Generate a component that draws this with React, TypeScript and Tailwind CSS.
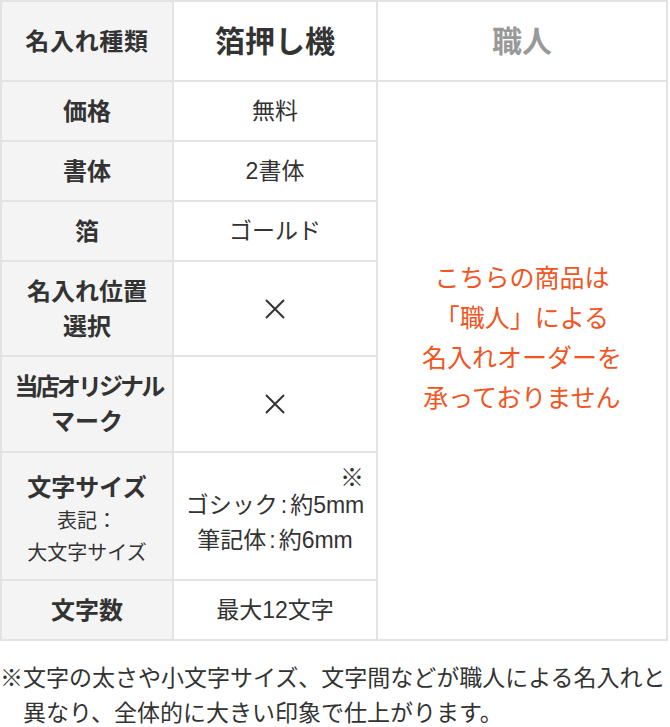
import React from "react";

const font = { fontFamily: '"Liberation Sans", "Noto Sans CJK JP", "Noto Sans", sans-serif' };

function Label({ children, className = "" }: { children: React.ReactNode; className?: string }) {
  return (
    <div className={`bg-[#f4f4f4] flex flex-col items-center text-center font-bold text-[24px] leading-[35px] text-[#333] ${className || "justify-center"}`}>
      {children}
    </div>
  );
}

function Value({ children, className = "" }: { children: React.ReactNode; className?: string }) {
  return (
    <div className={`bg-white flex flex-col items-center text-center text-[23px] leading-[35px] text-[#333] ${className || "justify-center"}`}>
      {children}
    </div>
  );
}

function Cross() {
  return (
    <svg width="20" height="20" viewBox="0 0 20 20" className="block">
      <path d="M1 1 L19 19 M19 1 L1 19" stroke="#333" strokeWidth="2" fill="none" />
    </svg>
  );
}

export default function App() {
  return (
    <div className="w-[670px] bg-white" style={font}>
      <div className="w-[668px] grid grid-cols-[170px_202px_288px] grid-rows-[78px_58px_58px_58px_93px_94px_126px_58px] gap-[2px] p-[2px] bg-[#e3e3e3]">
        <Label className="justify-center tracking-[0.03em]">名入れ種類</Label>
        <Value className="justify-center font-bold text-[30px]">箔押し機</Value>
        <div className="bg-white flex items-center justify-center font-bold text-[30px] text-[#999]">職人</div>

        <Label>価格</Label>
        <Value>無料</Value>
        <div className="row-span-7 bg-white flex items-center justify-center pb-[46px]">
          <p className="text-center text-[25px] leading-[40px] text-[#f05522]">
            こちらの商品は
            <br />
            「職人」による
            <br />
            名入れオーダーを
            <br />
            承っておりません
          </p>
        </div>

        <Label>書体</Label>
        <Value>2書体</Value>

        <Label>箔</Label>
        <Value>ゴールド</Value>

        <Label>
          <span>名入れ位置</span>
          <span>選択</span>
        </Label>
        <Value>
          <Cross />
        </Value>

        <Label>
          <span className="tracking-[-0.12em] mr-[-0.12em]">当店オリジナル</span>
          <span>マーク</span>
        </Label>
        <Value>
          <Cross />
        </Value>

        <Label className="justify-start pt-[18px]">
          <span className="leading-[34px]">文字サイズ</span>
          <span className="font-normal text-[20px] leading-[32px]">表記：</span>
          <span className="font-normal text-[20px] leading-[32px]">大文字サイズ</span>
        </Label>
        <Value className="justify-start pt-[11px] leading-[34px]">
          <span className="self-end mr-[12px] text-[24px] leading-[24px]" style={{ fontFamily: '"Noto Sans CJK JP", sans-serif' }}>※</span>
          <span className="whitespace-nowrap">
            ゴシック<span className="mx-[3px]">:</span>約5mm
          </span>
          <span className="whitespace-nowrap">
            筆記体<span className="mx-[3px]">:</span>約6mm
          </span>
        </Value>

        <Label>文字数</Label>
        <Value>最大12文字</Value>
      </div>
      <p className="mt-[20px] text-[23px] leading-[35px] text-[#333] pl-[1em] indent-[-1em]">
        ※文字の太さや小文字サイズ、文字間などが職人による名入れと異なり、全体的に大きい印象で仕上がります。
      </p>
    </div>
  );
}
